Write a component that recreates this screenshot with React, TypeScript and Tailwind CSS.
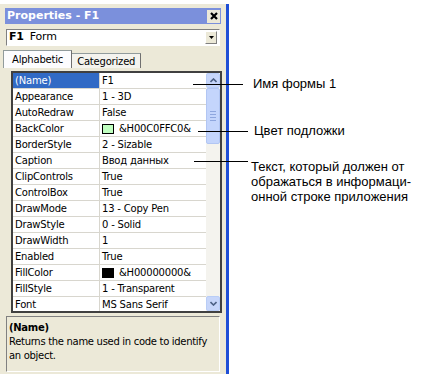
import React from 'react';

type Row = { name: string; value: string; swatch?: string };

const rows: Row[] = [
  { name: '(Name)', value: 'F1' },
  { name: 'Appearance', value: '1 - 3D' },
  { name: 'AutoRedraw', value: 'False' },
  { name: 'BackColor', value: '&H00C0FFC0&', swatch: '#c0ffc0' },
  { name: 'BorderStyle', value: '2 - Sizable' },
  { name: 'Caption', value: 'Ввод данных' },
  { name: 'ClipControls', value: 'True' },
  { name: 'ControlBox', value: 'True' },
  { name: 'DrawMode', value: '13 - Copy Pen' },
  { name: 'DrawStyle', value: '0 - Solid' },
  { name: 'DrawWidth', value: '1' },
  { name: 'Enabled', value: 'True' },
  { name: 'FillColor', value: '&H00000000&', swatch: '#000000' },
  { name: 'FillStyle', value: '1 - Transparent' },
  { name: 'Font', value: 'MS Sans Serif' },
];

function Chevron({ up }: { up?: boolean }) {
  return (
    <svg width="7" height="5" viewBox="0 0 7 5">
      <path
        d={up ? 'M0.5 4 L3.5 1 L6.5 4' : 'M0.5 1 L3.5 4 L6.5 1'}
        fill="none"
        stroke="#4d6185"
        strokeWidth="1.6"
      />
    </svg>
  );
}

function ScrollBar() {
  return (
    <div className="flex w-[14px] shrink-0 flex-col bg-[#f4f3ee]">
      <div className="flex h-[15px] items-center justify-center rounded-[2px] border border-[#b9cdf6] bg-[#c7d6fa]">
        <Chevron up />
      </div>
      <div className="flex h-[56px] flex-col items-center justify-center gap-[2px] rounded-[2px] border border-[#b2c6f3] bg-[#c4d5fc]">
        <div className="h-px w-[6px] bg-[#8ea6de]" />
        <div className="h-px w-[6px] bg-[#8ea6de]" />
        <div className="h-px w-[6px] bg-[#8ea6de]" />
        <div className="h-px w-[6px] bg-[#8ea6de]" />
      </div>
      <div className="flex-1" />
      <div className="flex h-[15px] items-center justify-center rounded-[2px] border border-[#b9cdf6] bg-[#c7d6fa]">
        <Chevron />
      </div>
    </div>
  );
}

export default function App() {
  return (
    <div className="relative h-[381px] w-[437px] overflow-hidden bg-white font-['DejaVu_Sans',sans-serif] text-[10px] tracking-[-0.2px] text-black">
      {/* Окно свойств */}
      <div className="mt-[4px] flex h-[370px] w-[229px] flex-col border-r-[3px] border-[#1f4fd6] bg-[#ece9d8] pt-[4px]">
        <div className="mx-[5px] flex h-[16px] items-center justify-between bg-[#7b90dc] pl-[2px] pr-[1px]">
          <span className="text-[11px] font-bold tracking-normal text-white">Properties - F1</span>
          <div className="flex h-[13px] w-[13px] items-center justify-center bg-[#ece9d8]">
            <svg width="8" height="8" viewBox="0 0 8 8">
              <path d="M1 1 L7 7 M7 1 L1 7" stroke="#000" strokeWidth="2.2" />
            </svg>
          </div>
        </div>

        <div className="mx-[6px] mt-[5px] flex h-[17px] items-center border border-t-[#808080] border-l-[#808080] border-r-white border-b-white bg-white pl-[2px] pr-[2px] text-[11px]">
          <span className="font-bold">F1</span>
          <span className="ml-[6px] flex-1">Form</span>
          <div className="flex h-[13px] w-[12px] items-center justify-center border border-t-white border-l-white border-r-[#808080] border-b-[#808080] bg-[#ece9d8]">
            <svg width="5" height="3" viewBox="0 0 5 3">
              <path d="M0 0 L5 0 L2.5 3 Z" fill="#000" />
            </svg>
          </div>
        </div>

        <div className="ml-[3px] mt-[4px] flex h-[18px] items-end">
          <div className="flex h-[18px] items-center border-x border-t border-x-[#919b9c] border-t-[#919b9c] border-r-[#707070] bg-[#fcfcfe] px-[8px]">
            Alphabetic
          </div>
          <div className="flex h-[15px] items-center border-r border-t border-r-[#707070] border-t-[#919b9c] bg-[#f4f3ee] px-[5px]">
            Categorized
          </div>
        </div>

        {/* Таблица свойств */}
        <div className="ml-[11px] mr-[4px] mt-[3px] flex h-[242px] overflow-hidden border-2 border-[#404040] bg-white">
          <div className="flex-1 overflow-hidden">
            {rows.map((r, i) => (
              <div key={r.name} className="flex h-[16px] border-b border-[#d8d6ce]">
                <div
                  className={
                    i === 0
                      ? 'flex w-[87px] shrink-0 items-center border-r border-[#d8d6ce] bg-[#316ac5] pl-[2px] text-white'
                      : 'flex w-[87px] shrink-0 items-center border-r border-[#d8d6ce] pl-[2px]'
                  }
                >
                  {r.name}
                </div>
                <div className="flex flex-1 items-center whitespace-nowrap pl-[2px]">
                  {r.swatch && (
                    <span
                      className="mr-[5px] inline-block h-[10px] w-[12px] border border-black"
                      style={{ backgroundColor: r.swatch }}
                    />
                  )}
                  {r.value}
                </div>
              </div>
            ))}
          </div>
          <ScrollBar />
        </div>

        {/* Описание */}
        <div className="mx-[6px] mb-[2px] mt-[3px] flex-1 border border-t-[#808080] border-l-[#808080] border-r-white border-b-white px-[2px] pt-[4px] leading-[14px] tracking-[-0.3px]">
          <div className="font-bold">(Name)</div>
          <div>Returns the name used in code to identify an object.</div>
        </div>
      </div>

      {/* Выноски */}
      <div className="absolute left-[193px] top-[84px] h-px w-[50px] bg-black" />
      <div className="absolute left-[253px] top-[76px] font-['Liberation_Sans',Arial,sans-serif] text-[13px] leading-[16px] tracking-normal">
        Имя формы 1
      </div>
      <div className="absolute left-[198px] top-[131px] h-px w-[50px] bg-black" />
      <div className="absolute left-[254px] top-[123px] font-['Liberation_Sans',Arial,sans-serif] text-[13px] leading-[16px] tracking-normal">
        Цвет подложки
      </div>
      <div className="absolute left-[194px] top-[161px] h-px w-[54px] bg-black" />
      <div className="absolute left-[251px] top-[159px] w-[170px] font-['Liberation_Sans',Arial,sans-serif] text-[13px] leading-[15px] tracking-normal">
        <div>Текст, который должен от</div>
        <div>ображаться в информаци-</div>
        <div>онной строке приложения</div>
      </div>
    </div>
  );
}
